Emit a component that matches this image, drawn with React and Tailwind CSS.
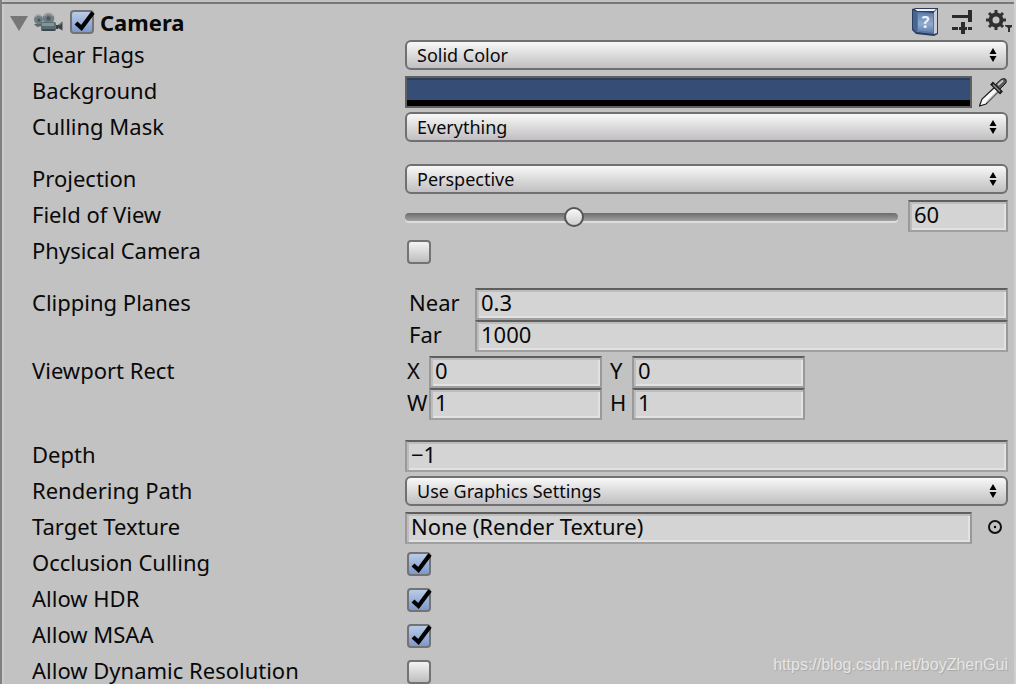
import { useState } from "react";

const FIELD =
  "w-full min-w-0 h-8 pl-1 pr-1 pb-1 text-[22px] border-2 border-t-[#5e5e5e] border-x-[#999999] border-b-[#a0a0a0] bg-[#d4d4d4] shadow-[inset_2px_2px_0_#bdbdbd,inset_-2px_-2px_0_#e2e2e2] outline-none";

function Row({ label, htmlFor, children }) {
  return (
    <div className="flex min-h-7 items-start">
      <label htmlFor={htmlFor} className="w-[373px] shrink-0 text-[22px] leading-7 whitespace-nowrap">
        {label}
      </label>
      <div className="min-w-0 flex-1">{children}</div>
    </div>
  );
}

function Popup({ id, options }) {
  return (
    <div className="relative h-8">
      <select
        id={id}
        className="block h-[30px] w-full appearance-none rounded-md border-2 border-[#707070] bg-linear-to-b from-[#f8f8f8] to-[#c1bfc1] pl-[10px] pr-8 text-[18px] outline-none"
      >
        {options.map((o) => (
          <option key={o}>{o}</option>
        ))}
      </select>
      <svg className="pointer-events-none absolute top-2 right-[11px]" width="8" height="14" viewBox="0 0 8 14">
        <path d="M4 0L7.500 6H0.500zM4 14L0.500 8H7.500z" fill="#000" />
      </svg>
    </div>
  );
}

function Toggle({ id, on, label }) {
  const [checked, setChecked] = useState(!!on);
  return (
    <span className="relative block size-6">
      <input
        id={id}
        type="checkbox"
        aria-label={label}
        checked={checked}
        onChange={(e) => setChecked(e.target.checked)}
        className="block size-6 appearance-none rounded border-2 border-[#737373] bg-linear-to-b from-[#f4f4f4] to-[#bfbdbf] checked:from-[#b9cce6] checked:to-[#7d9acb]"
      />
      {checked && (
        <svg className="pointer-events-none absolute top-0 left-0 overflow-visible" width="26" height="24" viewBox="0 0 26 24">
          <path d="M6 13L11.500 18L23 2.500" fill="none" stroke="#000" strokeWidth="4.200" />
        </svg>
      )}
    </span>
  );
}

function ToggleRow({ id, label, on }) {
  return (
    <Row label={label} htmlFor={id}>
      <div className="pt-1 pl-[2px]">
        <Toggle id={id} on={on} />
      </div>
    </Row>
  );
}

function SubField({ id, name, value, wide }) {
  return (
    <div className="flex">
      <label
        htmlFor={id}
        className={wide ? "w-[70px] shrink-0 pl-1 text-[22px] leading-7" : "w-6 shrink-0 pl-[2px] text-[22px] leading-7"}
      >
        {name}
      </label>
      <input id={id} defaultValue={value} className={FIELD} />
    </div>
  );
}

function CameraIcon() {
  return (
    <svg width="30" height="21" viewBox="0 0 30 21">
      <path d="M1 12L9 11V14L4 15z" fill="#5d696c" />
      <circle cx="5.500" cy="7.500" r="4.500" fill="#6f7d81" />
      <circle cx="15.500" cy="6.500" r="5.800" fill="#6f7e83" />
      <path d="M2 5a4.500 4.500 0 0 1 6-1M11 4a5.500 5.500 0 0 1 9 0" fill="none" stroke="#98a5a8" strokeWidth="1.500" />
      <circle cx="6" cy="8" r="1.500" fill="#48545a" />
      <circle cx="15.500" cy="6.500" r="2.200" fill="#4b595e" />
      <rect x="8" y="10" width="15" height="9" rx="1.500" fill="#5a6c71" />
      <rect x="9" y="11" width="12" height="3" fill="#82959a" />
      <rect x="9" y="17" width="13" height="2" rx="1" fill="#3c484b" />
      <path d="M23 13h2v4h-2z" fill="#3a4144" />
      <path d="M25 13L29.500 9.500V18.500L25 16z" fill="#3b4447" />
      <path d="M26 13L29 11" stroke="#788487" />
    </svg>
  );
}

function HelpIcon() {
  return (
    <svg width="27" height="28" viewBox="0 0 27 28">
      <defs>
        <linearGradient id="cover" x1="0" y1="0" x2="0" y2="1">
          <stop offset="0" stopColor="#5d7dab" />
          <stop offset="0.550" stopColor="#91abce" />
          <stop offset="1" stopColor="#5576a6" />
        </linearGradient>
      </defs>
      <path d="M0 1L4 0H26V26L22 28L4 26L0 22z" fill="#2c3d5c" />
      <path d="M3 1H24L22 3H5z" fill="#eceff4" />
      <path d="M22 4L25 1V25L22 26z" fill="#c9ced8" />
      <path d="M1 2L5 4V25L1 21z" fill="#466494" />
      <path d="M5 4L22 5V26L5 24z" fill="url(#cover)" />
      <path d="M5.500 4.500L21.500 5.500V25L5.500 23z" fill="none" stroke="#5675a3" />
      <text x="13.500" y="20" textAnchor="middle" fontSize="16" fontWeight="bold" fill="#eef3fa">
        ?
      </text>
    </svg>
  );
}

function PresetIcon() {
  return (
    <svg width="22" height="24" viewBox="0 0 22 24" fill="#2b2b2b">
      <path d="M0 5h14v3H0zM16 0h4v12h-4zM14 5h2v3h-2zM0 17h6v3H0zM9 12h4v12H9zM7 17h8v3H7zM16 17h4v3h-4z" />
    </svg>
  );
}

function GearIcon() {
  return (
    <svg width="26" height="24" viewBox="0 0 26 24">
      <circle cx="10" cy="11" r="5.500" fill="none" stroke="#303030" strokeWidth="4" />
      <path
        d="M10 1v4M10 17v4M0 11h4M16 11h4M3 4l3 3M14 15l3 3M3 18l3-3M14 7l3-3"
        stroke="#303030"
        strokeWidth="3"
      />
      <path d="M19 16h7v2l-2 1v4h-2v-4l-3-2z" fill="#303030" />
    </svg>
  );
}

function DropperIcon() {
  return (
    <svg width="28" height="30" viewBox="0 0 28 30">
      <path d="M16 10L3 22L0.500 29L7 27L20 14z" fill="#fafafa" stroke="#1c1c1c" strokeWidth="1.200" />
      <path d="M8 25L19 14" stroke="#aaa" strokeWidth="1.500" />
      <path d="M16 8L22 2.500Q25 0.500 27 2.500Q28 5 26 7L20 13z" fill="#5a5a5a" stroke="#1c1c1c" />
      <path d="M19 8L24 3.500" stroke="#c8c8c8" strokeWidth="2" />
      <path d="M12.500 6L22.500 16" stroke="#1c1c1c" strokeWidth="4" />
      <path d="M14 7.500L21 14.500" stroke="#888" strokeWidth="1.500" />
    </svg>
  );
}

export default function App() {
  const [fov, setFov] = useState(60);
  const [open, setOpen] = useState(true);

  return (
    <div className="relative min-h-screen overflow-hidden border-r-2 border-l-2 border-r-[#d0d0d0] border-l-[#808080] bg-[#c2c2c2] pt-[2px] font-['Noto_Sans',sans-serif] text-[#090909] shadow-[inset_2px_0_0_#cbcbcb]">
      <header className="flex h-[38px] items-start border-t-2 border-[#787878] pl-2">
        <button aria-label="Toggle component" onClick={() => setOpen(!open)} className="mt-3">
          <svg width="18" height="15" viewBox="0 0 18 15">
            <path d="M0 0H18L9 15z" fill="#777" />
          </svg>
        </button>
        <span className="mt-2 ml-[5px]">
          <CameraIcon />
        </span>
        <div className="mt-[6px] ml-[7px]">
          <Toggle id="enabled" on label="Camera enabled" />
        </div>
        <h2 className="ml-[6px] flex-1 text-[22px] leading-9 font-bold">Camera</h2>
        <button aria-label="Help" className="mt-1">
          <HelpIcon />
        </button>
        <button aria-label="Presets" className="mt-[6px] ml-[13px]">
          <PresetIcon />
        </button>
        <button aria-label="Component menu" className="mt-[5px] mr-[2px] ml-3">
          <GearIcon />
        </button>
      </header>

      {open && (
        <main className="flex flex-col gap-5 pr-[6px] pl-[30px]">
          <section className="flex flex-col gap-1">
            <Row label="Clear Flags" htmlFor="clear">
              <Popup id="clear" options={["Solid Color", "Skybox", "Depth only", "Don't Clear"]} />
            </Row>
            <Row label="Background" htmlFor="background">
              <div className="flex h-8">
                <button
                  id="background"
                  aria-label="Background color"
                  className="h-8 flex-1 border-2 border-[#606060] bg-[#364d75] shadow-[inset_0_-6px_0_#000,inset_0_2px_0_#2b3e5e]"
                />
                <button aria-label="Pick color" className="w-9 pl-[7px]">
                  <DropperIcon />
                </button>
              </div>
            </Row>
            <Row label="Culling Mask" htmlFor="culling">
              <Popup id="culling" options={["Everything", "Nothing", "Default"]} />
            </Row>
          </section>

          <section className="flex flex-col gap-1 pb-1">
            <Row label="Projection" htmlFor="projection">
              <Popup id="projection" options={["Perspective", "Orthographic"]} />
            </Row>
            <Row label="Field of View" htmlFor="fov">
              <div className="flex h-8 items-center gap-[10px]">
                <input
                  id="fov"
                  type="range"
                  min="0"
                  max="179"
                  value={fov}
                  onChange={(e) => setFov(e.target.value)}
                  className="mt-[2px] h-2 min-w-0 flex-1 appearance-none rounded-full bg-linear-to-b from-[#6c6c6c] to-[#a2a2a2] shadow-[0_2px_0_#dedede] [&::-webkit-slider-thumb]:size-5 [&::-webkit-slider-thumb]:appearance-none [&::-webkit-slider-thumb]:rounded-full [&::-webkit-slider-thumb]:border-2 [&::-webkit-slider-thumb]:border-[#555] [&::-webkit-slider-thumb]:bg-linear-to-b [&::-webkit-slider-thumb]:from-[#f8f8f8] [&::-webkit-slider-thumb]:to-[#cfcfcf]"
                />
                <div className="w-[100px] shrink-0">
                  <input
                    aria-label="Field of View value"
                    value={fov}
                    onChange={(e) => setFov(e.target.value)}
                    className={FIELD}
                  />
                </div>
              </div>
            </Row>
            <ToggleRow id="physical" label="Physical Camera" />
          </section>

          <section className="flex flex-col gap-1">
            <Row label="Clipping Planes">
              <SubField id="near" name="Near" value="0.3" wide />
              <SubField id="far" name="Far" value="1000" wide />
            </Row>
            <Row label="Viewport Rect">
              <div className="grid grid-cols-3 gap-x-[6px]">
                <SubField id="vx" name="X" value="0" />
                <SubField id="vy" name="Y" value="0" />
                <div className="row-span-2" />
                <SubField id="vw" name="W" value="1" />
                <SubField id="vh" name="H" value="1" />
              </div>
            </Row>
          </section>

          <section className="flex flex-col gap-1">
            <Row label="Depth" htmlFor="depth">
              <input id="depth" defaultValue="−1" className={FIELD} />
            </Row>
            <Row label="Rendering Path" htmlFor="path">
              <Popup id="path" options={["Use Graphics Settings", "Forward", "Deferred"]} />
            </Row>
            <Row label="Target Texture" htmlFor="target">
              <div className="flex">
                <input id="target" defaultValue="None (Render Texture)" className={FIELD} />
                <button aria-label="Select texture" className="flex h-[30px] w-9 shrink-0 items-center justify-end pr-[5px]">
                  <svg width="16" height="16" viewBox="0 0 16 16">
                    <circle cx="8" cy="8" r="6" fill="none" stroke="#111" strokeWidth="2" />
                    <circle cx="8" cy="8" r="1.200" fill="#000" />
                  </svg>
                </button>
              </div>
            </Row>
            <div className="flex flex-col gap-2">
              <ToggleRow id="occlusion" label="Occlusion Culling" on />
              <ToggleRow id="hdr" label="Allow HDR" on />
              <ToggleRow id="msaa" label="Allow MSAA" on />
              <ToggleRow id="dynamic" label="Allow Dynamic Resolution" />
            </div>
          </section>
        </main>
      )}

      <a
        href="https://blog.csdn.net/boyZhenGui"
        className="absolute right-[6px] bottom-[7px] font-['Liberation_Sans',sans-serif] text-base text-[#e6e6e6] [text-shadow:1px_1px_1px_#a6a6a6]"
      >
        https://blog.csdn.net/boyZhenGui
      </a>
    </div>
  );
}
